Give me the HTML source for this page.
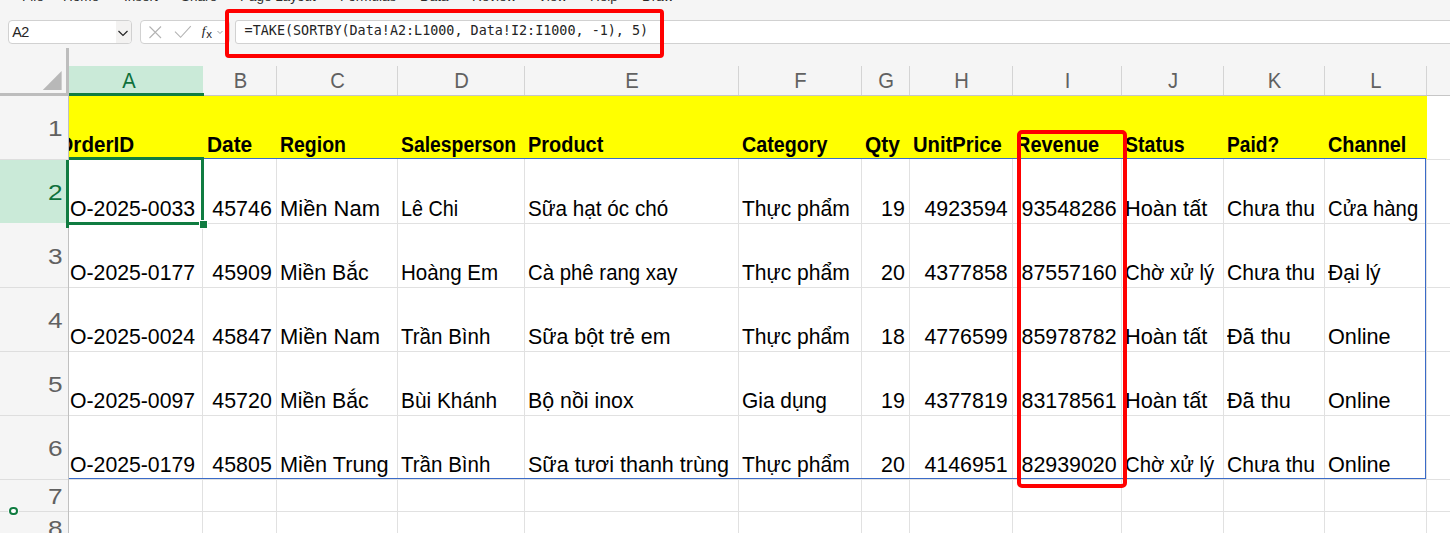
<!DOCTYPE html><html><head><meta charset="utf-8"><title>Sheet</title><style>

html,body{margin:0;padding:0}
body{width:1450px;height:533px;overflow:hidden;position:relative;background:#f5f5f5;font-family:"Liberation Sans",sans-serif;}
.abs{position:absolute}
.menu span{position:absolute;top:-10px;font-size:13.5px;color:#2b2b2b;white-space:nowrap;line-height:14px}
.box{position:absolute;box-sizing:border-box;background:#fff;border:1px solid #d1d1d1;border-radius:4px}
.grid{position:absolute;left:0;top:66px;width:1450px;height:467px;overflow:hidden}
.vl{position:absolute;width:1px;background:#e1e1e1}
.hl{position:absolute;height:1px;background:#e1e1e1}
.ch{position:absolute;top:66px;height:30px;line-height:30px;text-align:center;color:#616161;font-size:21.5px;transform:scaleX(0.94)}
.rh{position:absolute;left:0;width:62.5px;text-align:right;color:#616161;font-size:21.5px;transform:scaleX(1.22);transform-origin:100% 50%}
.t{position:absolute;white-space:nowrap;color:#000;line-height:24px;height:24px;transform-origin:0 50%;}
.t.r{transform-origin:100% 50%}
.b{font-weight:bold}

.t{font-family:"Liberation Sans","Liberation Sans",sans-serif;font-size:21.50px}
</style></head><body>
<div class="menu">
<span style="left:22px">File</span>
<span style="left:63px">Home</span>
<span style="left:124px">Insert</span>
<span style="left:181px">Share</span>
<span style="left:240px">Page Layout</span>
<span style="left:340px">Formulas</span>
<span style="left:420px">Data</span>
<span style="left:472px">Review</span>
<span style="left:538px">View</span>
<span style="left:590px">Help</span>
<span style="left:642px">Draw</span>
</div>
<div class="box" style="left:8px;top:20px;width:124px;height:24px;overflow:hidden"><div class="abs" style="left:107px;top:0;width:17px;height:24px;background:#f3f2f1"></div><span class="abs" id="nb" style="left:3.3px;top:3px;font-size:14.4px;line-height:16px;color:#242424;letter-spacing:-0.6px;transform:scaleX(1.0);transform-origin:0 50%">A2</span><svg class="abs" style="left:108.4px;top:6px" width="12" height="12" viewBox="0 0 12 12"><path d="M1.5 4 L6 8.5 L10.5 4" fill="none" stroke="#242424" stroke-width="1.2"/></svg></div>
<div class="box" style="left:140px;top:20px;width:90px;height:24px"><svg class="abs" style="left:0;top:0" width="90" height="24" viewBox="0 0 90 24"><path d="M8.5 5.5 L20 17 M20 5.5 L8.5 17" fill="none" stroke="#b3b3b3" stroke-width="1.1"/><path d="M34 10.6 L39.6 16.3 L49.8 5.2" fill="none" stroke="#b3b3b3" stroke-width="1.1"/><path d="M76.5 10 L79 12.5 L81.5 10" fill="none" stroke="#a0a0a0" stroke-width="1"/></svg><span class="abs" style="left:60.6px;top:2.2px;font-family:'Liberation Serif',serif;font-style:italic;font-size:12px;line-height:16px;color:#222;transform:scaleX(1.15)">f</span><span class="abs" style="left:65.2px;top:6.9px;font-size:11.5px;line-height:12px;color:#222">x</span></div>
<div class="box" style="left:235px;top:20px;width:1230px;height:24px;border-radius:3px"><span class="abs" id="fm" style="left:8.6px;top:2px;font-family:'DejaVu Sans Mono','Liberation Mono',monospace;font-size:13.41px;line-height:16px;color:#242424;white-space:pre">=TAKE(SORTBY(Data!A2:L1000, Data!I2:I1000, -1), 5)</span></div>
<div class="abs" style="left:225px;top:9px;width:439px;height:49px;box-sizing:border-box;border:4px solid #ff0000;border-radius:4px"></div>
<div class="abs" style="left:69px;top:96px;width:1381px;height:437px;background:#fff"></div>
<div class="abs" style="left:69px;top:96px;width:1358px;height:63px;background:#ffff00"></div>
<div class="vl" style="left:202px;top:159px;height:374px"></div>
<div class="vl" style="left:276px;top:159px;height:374px"></div>
<div class="vl" style="left:397px;top:159px;height:374px"></div>
<div class="vl" style="left:524px;top:159px;height:374px"></div>
<div class="vl" style="left:738px;top:159px;height:374px"></div>
<div class="vl" style="left:861px;top:159px;height:374px"></div>
<div class="vl" style="left:909px;top:159px;height:374px"></div>
<div class="vl" style="left:1012px;top:159px;height:374px"></div>
<div class="vl" style="left:1121px;top:159px;height:374px"></div>
<div class="vl" style="left:1223px;top:159px;height:374px"></div>
<div class="vl" style="left:1324px;top:159px;height:374px"></div>
<div class="vl" style="left:1426px;top:159px;height:374px"></div>
<div class="hl" style="left:1427px;top:159px;width:23px"></div>
<div class="hl" style="left:69px;top:223px;width:1381px"></div>
<div class="hl" style="left:69px;top:287px;width:1381px"></div>
<div class="hl" style="left:69px;top:351px;width:1381px"></div>
<div class="hl" style="left:69px;top:415px;width:1381px"></div>
<div class="hl" style="left:69px;top:479px;width:1381px"></div>
<div class="hl" style="left:69px;top:511px;width:1381px"></div>
<div class="vl" style="left:202px;top:66px;height:29px;background:#d4d4d4"></div>
<div class="vl" style="left:276px;top:66px;height:29px;background:#d4d4d4"></div>
<div class="vl" style="left:397px;top:66px;height:29px;background:#d4d4d4"></div>
<div class="vl" style="left:524px;top:66px;height:29px;background:#d4d4d4"></div>
<div class="vl" style="left:738px;top:66px;height:29px;background:#d4d4d4"></div>
<div class="vl" style="left:861px;top:66px;height:29px;background:#d4d4d4"></div>
<div class="vl" style="left:909px;top:66px;height:29px;background:#d4d4d4"></div>
<div class="vl" style="left:1012px;top:66px;height:29px;background:#d4d4d4"></div>
<div class="vl" style="left:1121px;top:66px;height:29px;background:#d4d4d4"></div>
<div class="vl" style="left:1223px;top:66px;height:29px;background:#d4d4d4"></div>
<div class="vl" style="left:1324px;top:66px;height:29px;background:#d4d4d4"></div>
<div class="vl" style="left:1426px;top:66px;height:29px;background:#d4d4d4"></div>
<div class="hl" style="left:0;top:95px;width:1450px;background:#c6c6c6"></div>
<div class="vl" style="left:68px;top:96px;height:437px;background:#c0c0c0"></div>
<div class="abs" style="left:66px;top:48px;width:3px;height:48px;background:#bdbdbd"></div>
<div class="abs" style="left:0;top:93px;width:69px;height:3px;background:#bdbdbd"></div>
<svg class="abs" style="left:42.4px;top:69.8px" width="21" height="21" viewBox="0 0 21 21"><path d="M19.6 1 L19.6 20 L0.8 20 Z" fill="#b8b8b8"/></svg>
<div class="abs" style="left:69px;top:66px;width:134px;height:27px;background:#caead8"></div>
<div class="abs" style="left:69px;top:93px;width:135px;height:3px;background:#107c41"></div>
<div class="abs" style="left:0;top:159px;width:66px;height:64px;background:#caead8"></div>
<div class="ch" style="left:55px;width:148px;color:#0e703b">A</div>
<div class="ch" style="left:204px;width:73px;color:#616161">B</div>
<div class="ch" style="left:277px;width:121px;color:#616161">C</div>
<div class="ch" style="left:398px;width:127px;color:#616161">D</div>
<div class="ch" style="left:525px;width:214px;color:#616161">E</div>
<div class="ch" style="left:739px;width:123px;color:#616161">F</div>
<div class="ch" style="left:862px;width:48px;color:#616161">G</div>
<div class="ch" style="left:910px;width:103px;color:#616161">H</div>
<div class="ch" style="left:1013px;width:109px;color:#616161">I</div>
<div class="ch" style="left:1122px;width:102px;color:#616161">J</div>
<div class="ch" style="left:1224px;width:101px;color:#616161">K</div>
<div class="ch" style="left:1325px;width:102px;color:#616161">L</div>
<div class="rh" style="top:97px;height:64px;line-height:64px;color:#616161">1</div>
<div class="hl" style="left:0;top:159px;width:68px;background:#dedede"></div>
<div class="rh" style="top:161px;height:64px;line-height:64px;color:#0e703b">2</div>
<div class="rh" style="top:225px;height:64px;line-height:64px;color:#616161">3</div>
<div class="hl" style="left:0;top:287px;width:68px;background:#dedede"></div>
<div class="rh" style="top:289px;height:64px;line-height:64px;color:#616161">4</div>
<div class="hl" style="left:0;top:351px;width:68px;background:#dedede"></div>
<div class="rh" style="top:353px;height:64px;line-height:64px;color:#616161">5</div>
<div class="hl" style="left:0;top:415px;width:68px;background:#dedede"></div>
<div class="rh" style="top:417px;height:64px;line-height:64px;color:#616161">6</div>
<div class="hl" style="left:0;top:479px;width:68px;background:#dedede"></div>
<div class="rh" style="top:481px;height:32px;line-height:32px;color:#616161">7</div>
<div class="hl" style="left:0;top:511px;width:68px;background:#dedede"></div>
<div class="rh" style="top:513px;height:32px;line-height:32px;color:#616161">8</div>
<div class="abs" id="cells" style="left:69px;top:96px;width:1381px;height:437px;overflow:hidden">
<span class="t b r" id="A1" style="right:1316.0px;top:37px;transform:scaleX(0.9583);">OrderID</span>
<span class="t b" id="B1" style="left:138.0px;top:37px;transform:scaleX(0.9705);">Date</span>
<span class="t b" id="C1" style="left:211.0px;top:37px;transform:scaleX(0.9049);">Region</span>
<span class="t b" id="D1" style="left:332.0px;top:37px;transform:scaleX(0.9004);">Salesperson</span>
<span class="t b" id="E1" style="left:459.0px;top:37px;transform:scaleX(0.9272);">Product</span>
<span class="t b" id="F1" style="left:673.0px;top:37px;transform:scaleX(0.9163);">Category</span>
<span class="t b" id="G1" style="left:796.0px;top:37px;transform:scaleX(0.9737);">Qty</span>
<span class="t b" id="H1" style="left:844.0px;top:37px;transform:scaleX(0.9417);">UnitPrice</span>
<span class="t b" id="I1" style="left:947.0px;top:37px;transform:scaleX(0.9282);">Revenue</span>
<span class="t b" id="J1" style="left:1056.0px;top:37px;transform:scaleX(0.9082);">Status</span>
<span class="t b" id="K1" style="left:1158.0px;top:37px;transform:scaleX(0.8911);">Paid?</span>
<span class="t b" id="L1" style="left:1259.0px;top:37px;transform:scaleX(0.9236);">Channel</span>
<span class="t" id="A2" style="left:1.3px;top:101px;transform:scaleX(0.9872);">O-2025-0033</span>
<span class="t r" id="B2" style="right:1178px;top:101px;transform:scaleX(0.9948);">45746</span>
<span class="t" id="C2" style="left:211.0px;top:101px;transform:scaleX(1.0198);">Miền Nam</span>
<span class="t" id="D2" style="left:332.0px;top:101px;transform:scaleX(0.9186);">Lê Chi</span>
<span class="t" id="E2" style="left:459.0px;top:101px;transform:scaleX(0.9613);">Sữa hạt óc chó</span>
<span class="t" id="F2" style="left:673.0px;top:101px;transform:scaleX(0.9800);">Thực phẩm</span>
<span class="t r" id="G2" style="right:545px;top:101px;transform:scaleX(0.9948);">19</span>
<span class="t r" id="H2" style="right:442px;top:101px;transform:scaleX(0.9948);">4923594</span>
<span class="t r" id="I2" style="right:333px;top:101px;transform:scaleX(0.9948);">93548286</span>
<span class="t" id="J2" style="left:1056.0px;top:101px;transform:scaleX(1.0131);">Hoàn tất</span>
<span class="t" id="K2" style="left:1158.0px;top:101px;transform:scaleX(0.9817);">Chưa thu</span>
<span class="t" id="L2" style="left:1259.0px;top:101px;transform:scaleX(0.9422);">Cửa hàng</span>
<span class="t" id="A3" style="left:1.3px;top:165px;transform:scaleX(0.9872);">O-2025-0177</span>
<span class="t r" id="B3" style="right:1178px;top:165px;transform:scaleX(0.9948);">45909</span>
<span class="t" id="C3" style="left:211.0px;top:165px;transform:scaleX(0.9897);">Miền Bắc</span>
<span class="t" id="D3" style="left:332.0px;top:165px;transform:scaleX(0.9562);">Hoàng Em</span>
<span class="t" id="E3" style="left:459.0px;top:165px;transform:scaleX(0.9476);">Cà phê rang xay</span>
<span class="t" id="F3" style="left:673.0px;top:165px;transform:scaleX(0.9800);">Thực phẩm</span>
<span class="t r" id="G3" style="right:545px;top:165px;transform:scaleX(0.9948);">20</span>
<span class="t r" id="H3" style="right:442px;top:165px;transform:scaleX(0.9948);">4377858</span>
<span class="t r" id="I3" style="right:333px;top:165px;transform:scaleX(0.9948);">87557160</span>
<span class="t" id="J3" style="left:1056.0px;top:165px;transform:scaleX(0.9459);">Chờ xử lý</span>
<span class="t" id="K3" style="left:1158.0px;top:165px;transform:scaleX(0.9817);">Chưa thu</span>
<span class="t" id="L3" style="left:1259.0px;top:165px;transform:scaleX(0.9785);">Đại lý</span>
<span class="t" id="A4" style="left:1.3px;top:229px;transform:scaleX(0.9872);">O-2025-0024</span>
<span class="t r" id="B4" style="right:1178px;top:229px;transform:scaleX(0.9948);">45847</span>
<span class="t" id="C4" style="left:211.0px;top:229px;transform:scaleX(1.0198);">Miền Nam</span>
<span class="t" id="D4" style="left:332.0px;top:229px;transform:scaleX(0.9546);">Trần Bình</span>
<span class="t" id="E4" style="left:459.0px;top:229px;transform:scaleX(0.9932);">Sữa bột trẻ em</span>
<span class="t" id="F4" style="left:673.0px;top:229px;transform:scaleX(0.9800);">Thực phẩm</span>
<span class="t r" id="G4" style="right:545px;top:229px;transform:scaleX(0.9948);">18</span>
<span class="t r" id="H4" style="right:442px;top:229px;transform:scaleX(0.9948);">4776599</span>
<span class="t r" id="I4" style="right:333px;top:229px;transform:scaleX(0.9948);">85978782</span>
<span class="t" id="J4" style="left:1056.0px;top:229px;transform:scaleX(1.0131);">Hoàn tất</span>
<span class="t" id="K4" style="left:1158.0px;top:229px;transform:scaleX(1.0059);">Đã thu</span>
<span class="t" id="L4" style="left:1259.0px;top:229px;transform:scaleX(1.0080);">Online</span>
<span class="t" id="A5" style="left:1.3px;top:293px;transform:scaleX(0.9872);">O-2025-0097</span>
<span class="t r" id="B5" style="right:1178px;top:293px;transform:scaleX(0.9948);">45720</span>
<span class="t" id="C5" style="left:211.0px;top:293px;transform:scaleX(0.9897);">Miền Bắc</span>
<span class="t" id="D5" style="left:332.0px;top:293px;transform:scaleX(0.9698);">Bùi Khánh</span>
<span class="t" id="E5" style="left:459.0px;top:293px;transform:scaleX(0.9931);">Bộ nồi inox</span>
<span class="t" id="F5" style="left:673.0px;top:293px;transform:scaleX(0.9715);">Gia dụng</span>
<span class="t r" id="G5" style="right:545px;top:293px;transform:scaleX(0.9948);">19</span>
<span class="t r" id="H5" style="right:442px;top:293px;transform:scaleX(0.9948);">4377819</span>
<span class="t r" id="I5" style="right:333px;top:293px;transform:scaleX(0.9948);">83178561</span>
<span class="t" id="J5" style="left:1056.0px;top:293px;transform:scaleX(1.0131);">Hoàn tất</span>
<span class="t" id="K5" style="left:1158.0px;top:293px;transform:scaleX(1.0059);">Đã thu</span>
<span class="t" id="L5" style="left:1259.0px;top:293px;transform:scaleX(1.0080);">Online</span>
<span class="t" id="A6" style="left:1.3px;top:357px;transform:scaleX(0.9872);">O-2025-0179</span>
<span class="t r" id="B6" style="right:1178px;top:357px;transform:scaleX(0.9948);">45805</span>
<span class="t" id="C6" style="left:211.0px;top:357px;transform:scaleX(1.0100);">Miền Trung</span>
<span class="t" id="D6" style="left:332.0px;top:357px;transform:scaleX(0.9546);">Trần Bình</span>
<span class="t" id="E6" style="left:459.0px;top:357px;transform:scaleX(1.0011);">Sữa tươi thanh trùng</span>
<span class="t" id="F6" style="left:673.0px;top:357px;transform:scaleX(0.9800);">Thực phẩm</span>
<span class="t r" id="G6" style="right:545px;top:357px;transform:scaleX(0.9948);">20</span>
<span class="t r" id="H6" style="right:442px;top:357px;transform:scaleX(0.9948);">4146951</span>
<span class="t r" id="I6" style="right:333px;top:357px;transform:scaleX(0.9948);">82939020</span>
<span class="t" id="J6" style="left:1056.0px;top:357px;transform:scaleX(0.9459);">Chờ xử lý</span>
<span class="t" id="K6" style="left:1158.0px;top:357px;transform:scaleX(0.9817);">Chưa thu</span>
<span class="t" id="L6" style="left:1259.0px;top:357px;transform:scaleX(1.0080);">Online</span>
</div>
<div class="abs" style="left:69px;top:158px;width:1357px;height:321px;box-sizing:border-box;border:1px solid #3a6bc8;border-left:none;border-top:1px solid #3a6bc8"></div>
<div class="abs" style="left:69px;top:157px;width:135px;height:3px;background:#107c41"></div>
<div class="abs" style="left:66px;top:160px;width:3px;height:67.7px;background:#107c41"></div>
<div class="abs" style="left:69px;top:222px;width:130px;height:2.8px;background:#107c41"></div>
<div class="abs" style="left:201px;top:160px;width:3px;height:60px;background:#107c41"></div>
<div class="abs" style="left:199px;top:220px;width:9px;height:9px;background:#fff"></div>
<div class="abs" style="left:200px;top:221px;width:7px;height:7px;background:#107c41"></div>
<div class="abs" style="left:1017px;top:130px;width:110px;height:358px;box-sizing:border-box;border:4px solid #ff0000;border-radius:5px"></div>
<div class="abs" style="left:9.4px;top:506.8px;width:8.7px;height:8.7px;box-sizing:border-box;border:2px solid #107c41;border-radius:50%;background:#fff;box-shadow:0 0 0 1px #fafafa"></div>
</body></html>
